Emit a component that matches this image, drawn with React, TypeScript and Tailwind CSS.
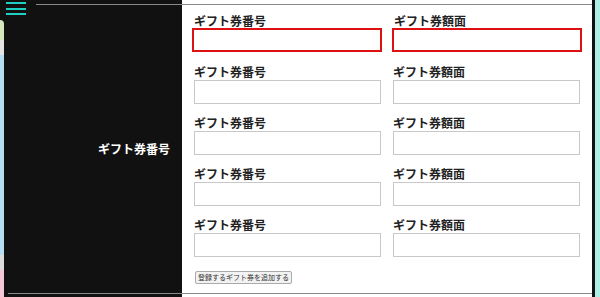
import React from 'react';

const rows = [0, 1, 2, 3, 4];

const Field: React.FC<{ label: string; error?: boolean }> = ({ label, error }) => (
  <div className="flex flex-col">
    <label className="h-[14px] text-[12px] leading-[14px] font-bold text-[#222] mb-px">{label}</label>
    {error ? (
      <input className="w-[190px] h-[24px] -ml-[2px] -mt-px mb-px border-2 border-[#dd1111] bg-white outline-none" />
    ) : (
      <input className="w-[187px] h-[24px] border border-[#c8c8c8] bg-white outline-none" />
    )}
  </div>
);

export default function App() {
  return (
    <div
      className="w-[600px] h-[297px] flex bg-[#111] overflow-hidden"
      style={{ fontFamily: '"Noto Sans CJK JP", "Noto Sans", sans-serif' }}
    >
      {/* left edge of the page behind */}
      <div className="w-[4px] flex flex-col">
        <div className="h-[20px] bg-[#111]" />
        <div className="h-[20px] bg-[#d6e6bd] rounded-tr-sm" />
        <div className="h-[15px] bg-[#e4e4e4]" />
        <div className="h-[200px] bg-[#b6def0]" />
        <div className="h-[15px] bg-[#dcdcdc]" />
        <div className="flex-1 bg-[#f4c6d8]" />
      </div>

      {/* header column */}
      <div className="relative w-[178px] bg-[#111]">
        <div className="ml-[4px] mt-[4px] h-[290px] border-y border-[#8a8a8a] flex items-center justify-end pr-[12px]">
          <span className="text-[12px] font-bold text-white">ギフト券番号</span>
        </div>
        <button className="absolute left-0 top-0 w-[32px] h-[18px] bg-[#111] pl-[2px] pt-[2px] flex flex-col gap-[3.5px]">
          <span className="block w-[20px] h-[2px] bg-[#1fd0c2]" />
          <span className="block w-[20px] h-[2px] bg-[#1fd0c2]" />
          <span className="block w-[20px] h-[2px] bg-[#1fd0c2]" />
        </button>
      </div>

      {/* form column */}
      <div className="w-[410px] bg-white">
        <div className="mt-[4px] h-[290px] border-y border-[#8a8a8a] pl-[12px] pt-[9px]">
          <div className="flex flex-col gap-[12px]">
            {rows.map((i) => (
              <div key={i} className="flex gap-[12px]">
                <Field label="ギフト券番号" error={i === 0} />
                <Field label="ギフト券額面" error={i === 0} />
              </div>
            ))}
          </div>
          <button className="mt-[14px] ml-px h-[13px] px-[2px] border border-[#aaa] rounded-[2px] bg-[#f2f2f2] text-[7px] leading-[11px] text-[#333]">
            登録するギフト券を追加する
          </button>
        </div>
      </div>

      {/* right edge */}
      <div className="w-[3px] bg-[#111]" />
      <div className="flex-1 bg-[#aef0e8]" />
    </div>
  );
}
